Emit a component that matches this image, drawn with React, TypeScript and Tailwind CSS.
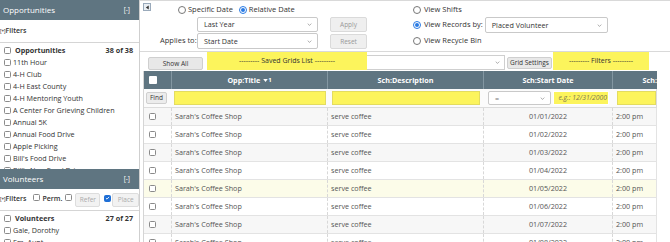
import React from "react";

const Check = ({ checked = false }: { checked?: boolean }) => (
  <span
    className={`inline-flex h-[7px] w-[7px] shrink-0 items-center justify-center rounded-[1.5px] border ${
      checked ? "border-[#1f6fd6] bg-[#1f6fd6]" : "border-[#8a8a8a] bg-white"
    }`}
  >
    {checked && (
      <svg viewBox="0 0 8 8" className="h-[6px] w-[6px]">
        <path d="M1.5 4.2 3.2 5.8 6.5 2.2" stroke="white" strokeWidth="1.4" fill="none" />
      </svg>
    )}
  </span>
);

const Radio = ({ checked = false }: { checked?: boolean }) => (
  <span
    className={`inline-flex h-[8px] w-[8px] shrink-0 items-center justify-center rounded-full border bg-white ${
      checked ? "border-[#2a7be4]" : "border-[#777]"
    }`}
  >
    {checked && <span className="h-[4px] w-[4px] rounded-full bg-[#2a7be4]" />}
  </span>
);

const Chevron = () => (
  <svg viewBox="0 0 8 5" className="h-[3px] w-[5px] shrink-0">
    <path d="M1 1l3 3 3-3" stroke="#777" fill="none" strokeWidth="1" />
  </svg>
);

const Select = ({ children, className = "" }: { children: React.ReactNode; className?: string }) => (
  <div
    className={`flex items-center justify-between rounded-[2px] border border-[#c9c9c9] bg-white pl-[6px] pr-[5px] text-[7.2px] text-[#333] ${className}`}
  >
    <span>{children}</span>
    <Chevron />
  </div>
);

const PanelHeader = ({ title }: { title: string }) => (
  <div className="flex h-[20px] shrink-0 items-center justify-between bg-[#5f7581] pl-[3px] pr-[9px] text-[8px] text-white">
    <span>{title}</span>
    <span className="text-[6.5px]">[-]</span>
  </div>
);

const ListRow = ({ label, count, bold }: { label: string; count?: string; bold?: boolean }) => (
  <div className="flex h-[12px] items-center gap-[2px] pl-[4px] pr-[6px] text-[7.2px] text-[#333]">
    <Check />
    <span className={`grow whitespace-nowrap ${bold ? "pl-[2px] font-bold" : ""}`}>{label}</span>
    {count && <span className="font-bold">{count}</span>}
  </div>
);

const opportunities = [
  "11th Hour",
  "4-H Club",
  "4-H East County",
  "4-H Mentoring Youth",
  "A Center For Grieving Children",
  "Annual 5K",
  "Annual Food Drive",
  "Apple Picking",
  "Bill's Food Drive",
  "Bill's New Food Drive",
];

const rows = [
  { date: "01/01/2022", bg: "bg-[#f7f7f7]" },
  { date: "01/02/2022", bg: "bg-white" },
  { date: "01/03/2022", bg: "bg-[#f7f7f7]" },
  { date: "01/04/2022", bg: "bg-white" },
  { date: "01/05/2022", bg: "bg-[#fcfce9]" },
  { date: "01/06/2022", bg: "bg-white" },
  { date: "01/07/2022", bg: "bg-[#f7f7f7]" },
  { date: "01/08/2022", bg: "bg-white" },
];

const cols = "grid grid-cols-[28px_156px_156px_129px_45px]";

export default function App() {
  return (
    <div className="flex h-[242px] w-[670px] overflow-hidden bg-white font-['Open_Sans',sans-serif] text-[#333]">
      {/* left panel */}
      <div className="flex h-full w-[140px] shrink-0 flex-col border-r border-[#cfcfcf]">
        <PanelHeader title="Opportunities" />
        <div className="flex h-[22px] shrink-0 items-center text-[7px] font-semibold text-[#333]">
          <span className="text-[4.5px]">[+]</span>Filters
        </div>
        <div className="h-[127px] shrink-0 overflow-hidden border-t border-[#d5d5d5] pt-[1px]">
          <ListRow label="Opportunities" count="38 of 38" bold />
          {opportunities.map((o) => (
            <ListRow key={o} label={o} />
          ))}
        </div>
        <PanelHeader title="Volunteers" />
        <div className="flex h-[22px] shrink-0 items-center border-b border-[#d5d5d5] text-[7px] font-semibold">
          <span className="text-[4.5px]">[+]</span>Filters
          <span className="ml-[7px]">
            <Check />
          </span>
          <span className="ml-[2px]">Perm.</span>
          <span className="ml-[3px]">
            <Check />
          </span>
          <span className="ml-[3px] flex h-[14px] w-[25px] items-center justify-center rounded-[2px] border border-[#ddd] bg-[#f2f2f2] text-[6.5px] font-normal text-[#aaa]">
            Refer
          </span>
          <span className="ml-[4px]">
            <Check checked />
          </span>
          <span className="ml-[1px] flex h-[14px] grow items-center justify-center rounded-[2px] border border-[#ddd] bg-[#f2f2f2] text-[6.5px] font-normal text-[#aaa]">
            Place
          </span>
        </div>
        <div className="overflow-hidden pt-[1px]">
          <ListRow label="Volunteers" count="27 of 27" bold />
          <ListRow label="Gale, Dorothy" />
          <ListRow label="Em, Aunt" />
        </div>
      </div>

      {/* right area */}
      <div className="flex min-w-0 grow flex-col">
        {/* filter panel */}
        <div className="flex h-[52px] shrink-0 border-y border-[#d9d9d9] text-[7.5px] text-[#333]">
          <div className="ml-[3px] mt-[2px] flex h-[8px] w-[8px] items-center justify-center border border-[#9aaabb] bg-[#e9eef3]">
            <svg viewBox="0 0 6 6" className="h-[5px] w-[5px]">
              <path d="M4.5 0.5v5L1 3z" fill="#333" />
            </svg>
          </div>

          <div className="ml-[9px] flex flex-col">
            <div className="flex h-[16px] items-center pl-[18px] pt-[2px]">
              <Radio />
              <span className="ml-[2px]">Specific Date</span>
              <span className="ml-[6px]">
                <Radio checked />
              </span>
              <span className="ml-[2px]">Relative Date</span>
            </div>
            <div className="flex h-[16px] items-start">
              <Select className="ml-[37px] h-[15px] w-[121px]">Last Year</Select>
            </div>
            <div className="flex items-center">
              <span className="w-[37px] whitespace-nowrap">Applies to:</span>
              <Select className="h-[16px] w-[121px]">Start Date</Select>
            </div>
          </div>

          <div className="ml-[12px] flex flex-col gap-[2px] pt-[16px]">
            <div className="flex h-[15px] w-[37px] items-center justify-center rounded-[2px] border border-[#dadada] bg-[#efefef] text-[6.5px] text-[#999]">
              Apply
            </div>
            <div className="flex h-[15px] w-[37px] items-center justify-center rounded-[2px] border border-[#dadada] bg-[#efefef] text-[6.5px] text-[#999]">
              Reset
            </div>
          </div>

          <div className="ml-[46px] flex flex-col">
            <div className="flex h-[16px] items-center gap-[3px] pt-[2px]">
              <Radio />
              <span>View Shifts</span>
            </div>
            <div className="flex h-[16px] items-center gap-[3px]">
              <Radio checked />
              <span className="whitespace-nowrap">View Records by:</span>
              <Select className="ml-[-1px] h-[16px] w-[123px]">Placed Volunteer</Select>
            </div>
            <div className="flex h-[16px] items-center gap-[3px]">
              <Radio />
              <span>View Recycle Bin</span>
            </div>
          </div>
        </div>

        {/* toolbar */}
        <div className="flex h-[19px] shrink-0 items-end pb-[1px] text-[6.5px] text-[#333]">
          <div className="mb-0 ml-[8px] flex h-[13px] w-[55px] items-center justify-center rounded-[2px] border border-[#cfcfcf] bg-[#e8e8e8]">
            Show All
          </div>
          <div className="ml-[4px] flex h-[18px] w-[298px]">
            <div className="flex w-[160px] items-center justify-center bg-[#fcf45c] text-[7px]">
              --------- Saved Grids List ---------
            </div>
            <div className="flex h-[15px] grow items-center justify-end self-end border-y border-r border-[#cfcfcf] bg-white pr-[4px]">
              <Chevron />
            </div>
          </div>
          <div className="mb-[1px] ml-[2px] flex h-[12px] w-[45px] items-center justify-center rounded-[2px] border border-[#cfcfcf] bg-[#e8e8e8] whitespace-nowrap">
            Grid Settings
          </div>
          <div className="ml-[1px] flex h-[18px] w-[96px] items-center justify-center bg-[#fcf45c] text-[7px]">
            --------- Filters ---------
          </div>
        </div>

        {/* table */}
        <div className="ml-[3px] w-[514px] border-l border-[#d5d5d5] text-[7.2px]">
          <div className={`${cols} h-[18px] bg-[#5f7581] font-bold text-white`}>
            <div className="flex items-center border-r border-[#8397a2] pl-[5px]">
              <span className="h-[8px] w-[8px] rounded-[1px] bg-white" />
            </div>
            <div className="flex items-center justify-center gap-[3px] border-r border-[#8397a2]">
              Opp:Title
              <span className="flex items-center">
                <svg viewBox="0 0 6 4" className="h-[3px] w-[5px]">
                  <path d="M0 0h6L3 4z" fill="white" />
                </svg>
                <span className="text-[6px]">1</span>
              </span>
            </div>
            <div className="flex items-center justify-center border-r border-[#8397a2]">Sch:Description</div>
            <div className="flex items-center justify-center border-r border-[#8397a2]">Sch:Start Date</div>
            <div className="flex items-center justify-end overflow-hidden pr-[1px]">Sch:</div>
          </div>

          <div className={`${cols} h-[19px] border-b border-r border-[#dcdcdc] bg-[#fbfbfb]`}>
            <div className="flex items-center pl-[2px]">
              <span className="flex h-[12px] w-[21px] items-center justify-center rounded-[2px] border border-[#cfcfcf] bg-[#ececec] text-[6.5px]">
                Find
              </span>
            </div>
            <div className="flex items-center px-[2px]">
              <div className="h-[14px] w-full border border-[#e3dc60] bg-[#fcf45c]" />
            </div>
            <div className="flex items-center px-[4px]">
              <div className="h-[14px] w-full border border-[#e3dc60] bg-[#fcf45c]" />
            </div>
            <div className="flex items-center gap-[2px] pl-[4px]">
              <Select className="h-[14px] w-[63px] shrink-0 text-[#777]">=</Select>
              <div className="flex h-[14px] w-[56px] shrink-0 items-center justify-end border border-white bg-[#fcf45c] pr-[1px] text-[6.8px] italic text-[#7c7650]">
                e.g.: 12/31/2000
              </div>
            </div>
            <div className="flex items-center pl-[4px] pr-[2px]">
              <div className="h-[14px] w-full border border-[#e3dc60] bg-[#fcf45c]" />
            </div>
          </div>

          {rows.map((r) => (
            <div key={r.date} className={`${cols} h-[18px] border-b border-r border-[#e3e3e3] text-[#555] ${r.bg}`}>
              <div className="flex items-center border-r border-dashed border-[#d8d8d8] pl-[5px]">
                <Check />
              </div>
              <div className="flex items-center border-r border-dashed border-[#d8d8d8] pl-[3px]">
                Sarah's Coffee Shop
              </div>
              <div className="flex items-center border-r border-dashed border-[#d8d8d8] pl-[3px]">serve coffee</div>
              <div className="flex items-center justify-center border-r border-dashed border-[#d8d8d8]">
                {r.date}
              </div>
              <div className="flex items-center pl-[3px] whitespace-nowrap">2:00 pm</div>
            </div>
          ))}
        </div>
      </div>
    </div>
  );
}
